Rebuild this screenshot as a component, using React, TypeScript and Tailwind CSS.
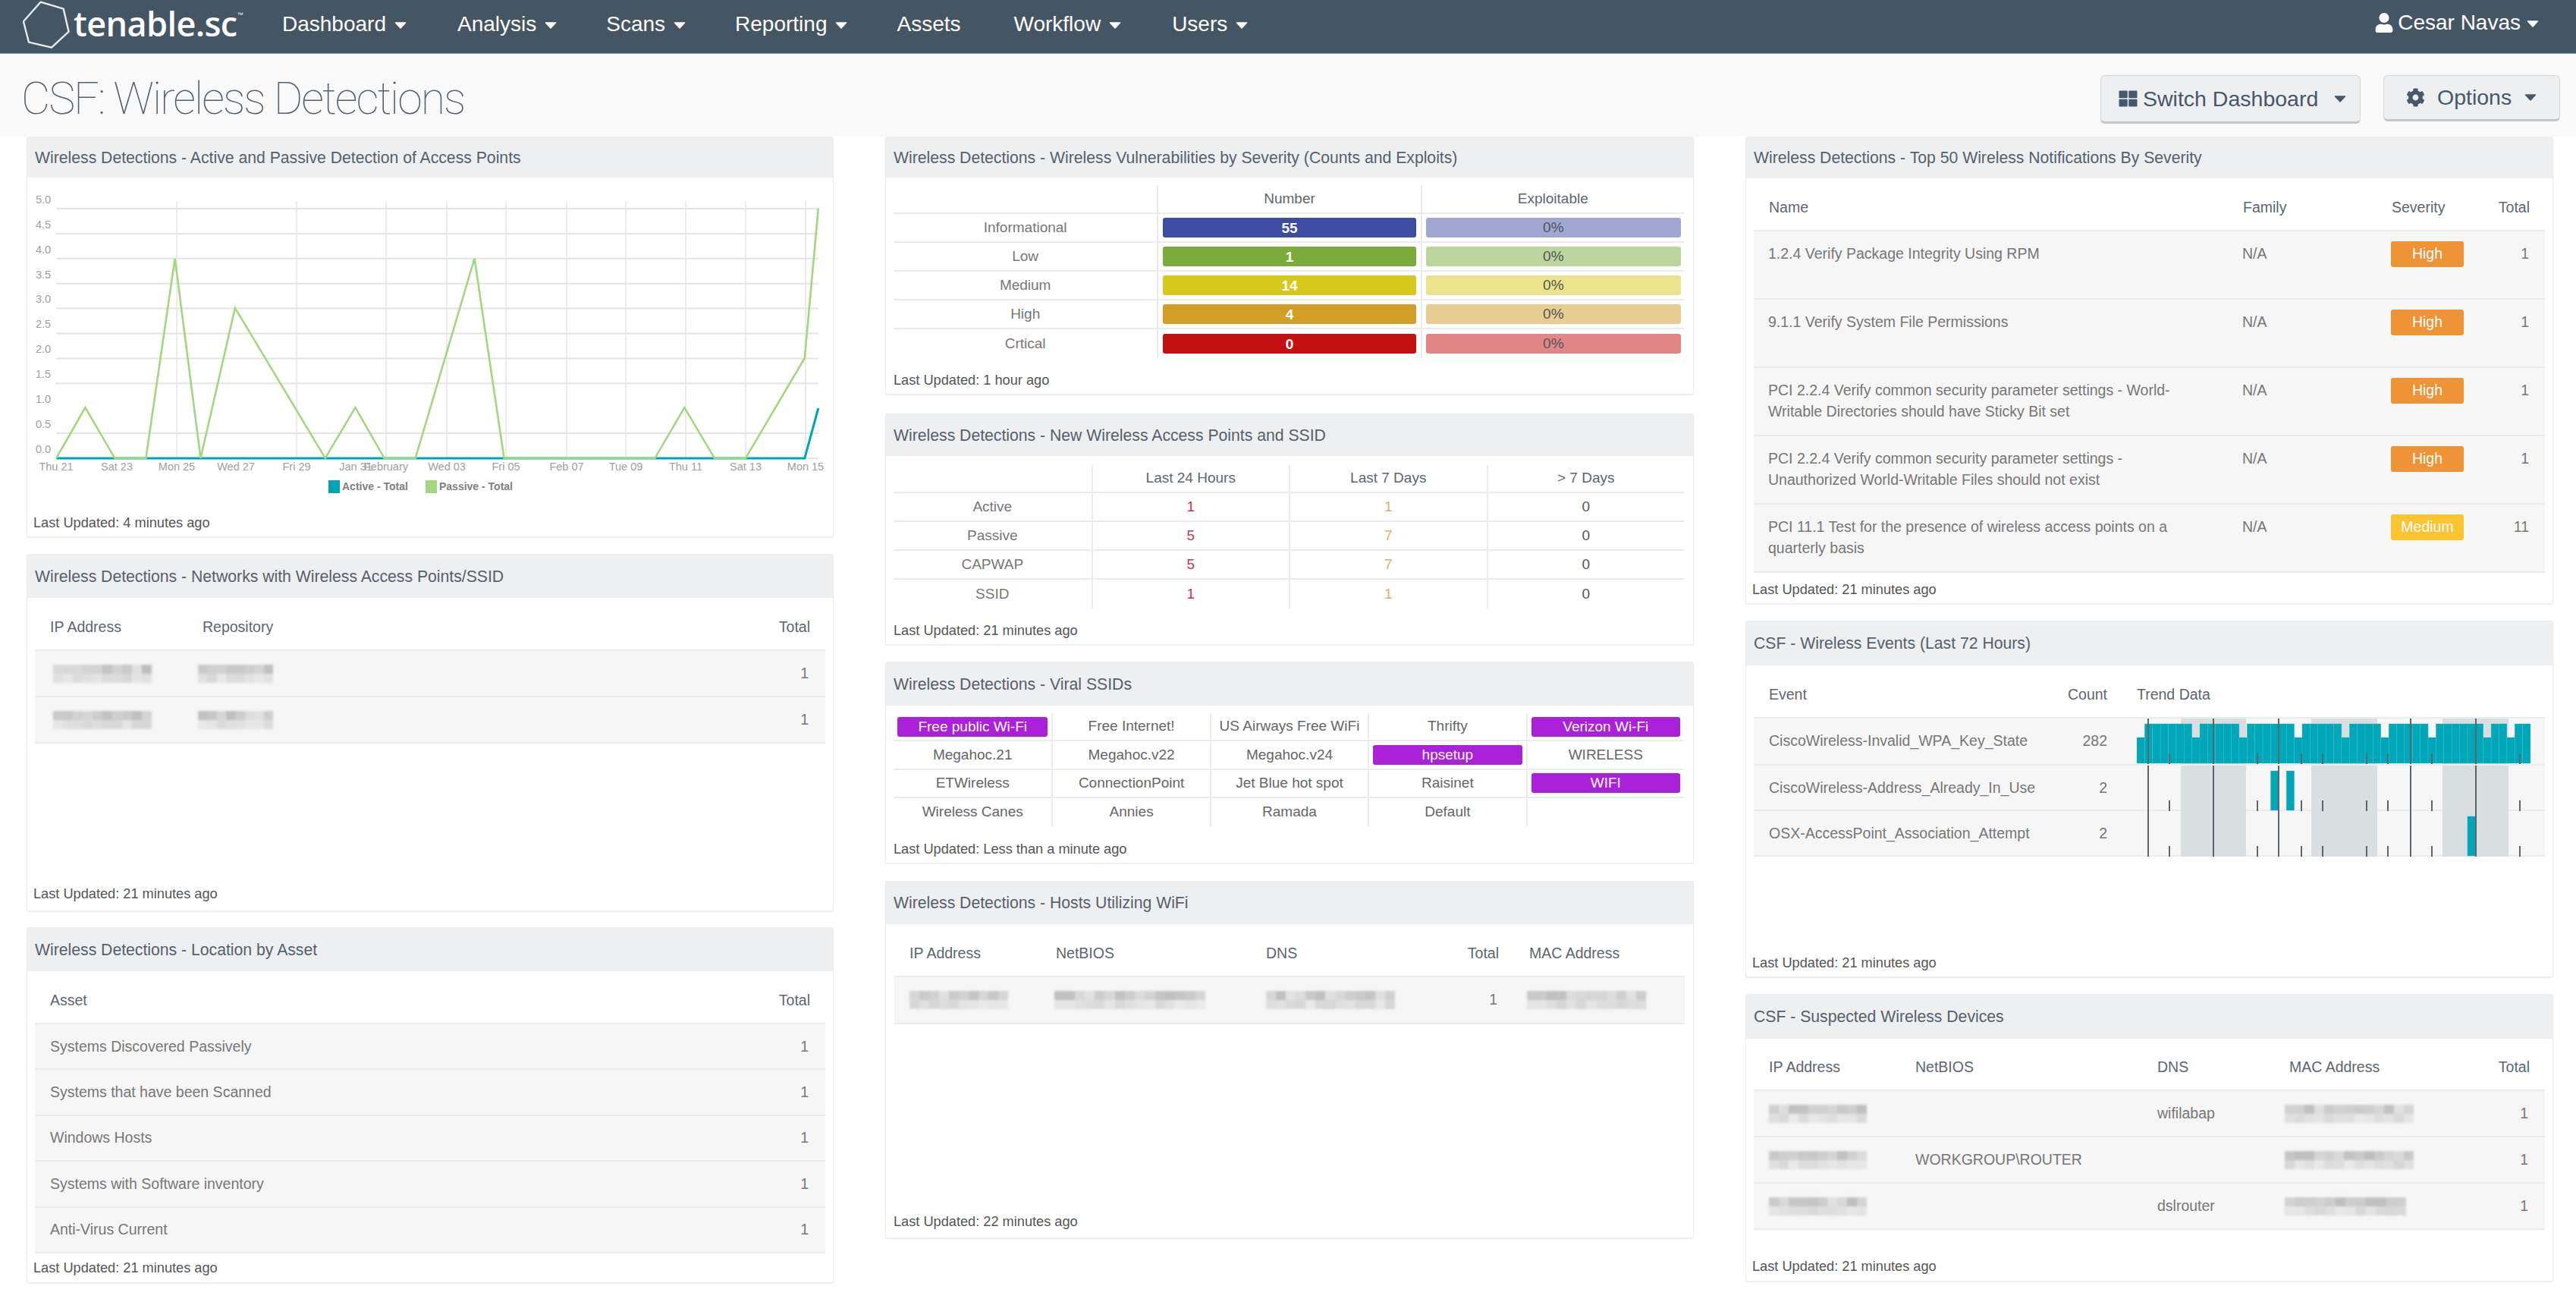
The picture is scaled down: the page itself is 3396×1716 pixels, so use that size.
import type { ReactNode } from "react";
import { FaCog, FaThLarge, FaUser } from "react-icons/fa";

function Caret({ className = "" }: { className?: string }) {
  return (
    <svg viewBox="0 0 16 9" className={`w-4 h-[9px] shrink-0 ${className}`}>
      <path d="M1.5 1h13L8 8z" fill="currentColor" stroke="currentColor" strokeWidth="1.5" strokeLinejoin="round" />
    </svg>
  );
}

function NavItem({ label, caret = true, className = "" }: { label: string; caret?: boolean; className?: string }) {
  return (
    <div className={`flex items-center gap-[11px] ${className}`}>
      <span>{label}</span>
      {caret && <Caret className="mt-[3px]" />}
    </div>
  );
}

function Logo() {
  return (
    <div className="flex items-center w-[372px] shrink-0 pl-[30px]">
      <svg viewBox="0 0 64 64" className="w-[64px] h-[64px] shrink-0 mt-[-4px]">
        <path d="M23.5 1.7 53.7 10.7 60.6 40.7 38 61.7 8 54.7 .9 27.3z" fill="none" stroke="#e8ecef" strokeWidth="2.4" strokeLinejoin="round" />
      </svg>
      <span className="ml-[3px] text-[45px] leading-none font-semibold text-white font-['Open_Sans',sans-serif] mt-[-10px] tracking-[-0.6px]">tenable.sc</span>
      <span className="text-[8px] text-white mt-[-30px]">™</span>
    </div>
  );
}

function TopNav() {
  return (
    <nav className="flex items-center h-[71px] bg-[#445564] border-b border-[#8f9ba6] text-[28px] text-white">
      <Logo />
      <div className="flex items-center gap-[65px] mt-[-7px]">
        <NavItem label="Dashboard" />
        <NavItem label="Analysis" className="ml-[2px]" />
        <NavItem label="Scans" />
        <NavItem label="Reporting" />
        <NavItem label="Assets" caret={false} />
        <NavItem label="Workflow" className="ml-[5px]" />
        <NavItem label="Users" className="ml-[2px]" />
      </div>
      <div className="ml-auto flex items-center mr-[49px] mt-[-11px]">
        <FaUser className="w-[24px] h-[26px] mr-[6px]" />
        <span>Cesar Navas</span>
        <Caret className="ml-[8px] mt-[3px]" />
      </div>
    </nav>
  );
}

function PageHeader() {
  return (
    <header className="flex items-start h-[109px] bg-[#f9f9f9] pl-[28px] pr-[21px]">
      <h1 className="mt-[25px] text-[59px] leading-[68px] tracking-[-2px] font-thin text-[#55626e] font-['Roboto',sans-serif]">CSF: Wireless Detections</h1>
      <div className="ml-auto flex items-start gap-[30px] mt-[28px] text-[28.5px] text-[#46586a]">
        <button className="flex items-center h-[64px] w-[343px] pl-[22px] bg-[#eeeff1] border border-[#d5d7d9] border-b-[3px] border-b-[#c4c7ca] rounded-[6px]">
          <FaThLarge className="w-[27px] h-[24px] mr-[6px]" />
          <span>Switch Dashboard</span>
          <Caret className="ml-[21px]" />
        </button>
        <button className="flex items-center h-[61px] w-[233px] pl-[29px] bg-[#eeeff1] border border-[#d5d7d9] border-b-[3px] border-b-[#c4c7ca] rounded-[6px]">
          <FaCog className="w-[25px] h-[25px] mr-[16px]" />
          <span>Options</span>
          <Caret className="ml-[17px]" />
        </button>
      </div>
    </header>
  );
}

interface PanelProps {
  title: string;
  updated: string;
  className: string;
  headClass?: string;
  footClass?: string;
  children: ReactNode;
}

function Panel({ title, updated, className, headClass = "h-[57px]", footClass = "pl-[8px] pb-[6px]", children }: PanelProps) {
  return (
    <section className={`flex flex-col bg-white border border-[#eeeeee] rounded-[3px] shadow-[0_1px_2px_rgba(0,0,0,0.07)] ${className}`}>
      <div className={`flex items-center shrink-0 pl-[10px] bg-[#eeeff1] text-[21.2px] text-[#56616b] ${headClass}`}>{title}</div>
      <div className="flex-1 min-h-0 px-[10px] pt-[10px]">{children}</div>
      <div className={`shrink-0 leading-[24px] text-[18.2px] text-[#555555] ${footClass}`}>Last Updated: {updated}</div>
    </section>
  );
}

function Head({ cols, children }: { cols: string; children: ReactNode }) {
  return <div className={`grid items-center h-[60px] px-[20px] border-b-2 border-[#ececec] text-[19.5px] text-[#5c6670] ${cols}`}>{children}</div>;
}

function Row({ cols, h = "h-[61px]", children }: { cols: string; h?: string; children: ReactNode }) {
  return <div className={`grid items-center px-[20px] bg-[#f6f6f6] border-b-2 border-[#ececec] text-[19.5px] text-[#777777] ${cols} ${h}`}>{children}</div>;
}

// pixelated redaction block, like the censored values in the picture
function Mosaic({ w, seed }: { w: number; seed: number }) {
  const cells = Math.round(w / 13);
  const shade = (row: number, i: number) => {
    const n = Math.sin(seed * 12.9 + i * 78.2 + row * 37.7) * 43758.5;
    const f = n - Math.floor(n);
    const v = Math.round(row === 0 ? 190 + f * 36 : 214 + f * 20);
    return `rgb(${v},${v},${v})`;
  };
  return (
    <div className="flex flex-col blur-[1.5px]" style={{ width: w }}>
      {[0, 1].map((row) => (
        <div key={row} className="flex h-[12px]">
          {Array.from({ length: cells }, (_, i) => (
            <span key={i} className="flex-1" style={{ background: shade(row, i) }} />
          ))}
        </div>
      ))}
    </div>
  );
}

const passive = [
  [74.2, 603.8], [112.4, 537.2], [151.3, 603.8], [192.4, 603.8], [230.6, 340.7], [264.5, 603.8], [309.9, 405.9],
  [428.8, 603.8], [468.4, 537.2], [506.6, 603.8], [547.7, 603.8], [625.5, 340.7], [664.5, 603.8], [863.4, 603.8],
  [902.3, 537.2], [941.9, 603.8], [983, 603.8], [1060.8, 472], [1078.8, 274.6],
];
const active = [[74.2, 604], [1060.8, 604], [1078.8, 538]];
const xTicks = [
  ["Thu 21", 74], ["Sat 23", 154], ["Mon 25", 233], ["Wed 27", 311], ["Fri 29", 391], ["Jan 31", 469], ["February", 509],
  ["Wed 03", 589], ["Fri 05", 667], ["Feb 07", 747], ["Tue 09", 825], ["Thu 11", 904], ["Sat 13", 983], ["Mon 15", 1062],
] as const;
const vLines = [233, 391, 509, 589, 667, 747, 825, 904, 983, 1062];
const yVals = ["5.0", "4.5", "4.0", "3.5", "3.0", "2.5", "2.0", "1.5", "1.0", "0.5", "0.0"];
const toPoints = (p: number[][]) => p.map((q) => q.join(",")).join(" ");

function DetectionChart() {
  return (
    <svg viewBox="36 244 1062 410" className="block w-[1062px] h-[410px] ml-[-10px]">
      {vLines.map((x) => (
        <line key={x} x1={x} x2={x} y1={265} y2={604} stroke="#e6e6e6" strokeWidth="1.5" />
      ))}
      {yVals.map((v, i) => {
        const y = 275 + i * 32.9;
        return (
          <g key={v}>
            {v !== "1.0" && <line x1={74} x2={1079} y1={y} y2={y} stroke="#e4e4e4" strokeWidth="2" />}
            <text x={47} y={y - 11} dominantBaseline="middle" fontSize="14.5" fill="#a0a0a0">{v}</text>
          </g>
        );
      })}
      {xTicks.map(([t, x]) => (
        <text key={t} x={x} y={616} textAnchor="middle" dominantBaseline="middle" fontSize="14.5" fill="#a0a0a0">{t}</text>
      ))}
      <polyline points={toPoints(active)} fill="none" stroke="#00a5b5" strokeWidth="3" />
      <polyline points={toPoints(passive)} fill="none" stroke="#a3d77f" strokeWidth="2.6" />
      <rect x={433} y={633} width={15} height={17} fill="#00a5b5" />
      <text x={451} y={642} dominantBaseline="middle" fontSize="14" fontWeight="700" fill="#808080">Active - Total</text>
      <rect x={561} y={633} width={15} height={17} fill="#a3d77f" />
      <text x={579} y={642} dominantBaseline="middle" fontSize="14" fontWeight="700" fill="#808080">Passive - Total</text>
    </svg>
  );
}

const severity = [
  { label: "Informational", n: "55", bar: "bg-[#3d4ca0]", light: "bg-[#9fa7d2]" },
  { label: "Low", n: "1", bar: "bg-[#7bab3a]", light: "bg-[#bcd59d]" },
  { label: "Medium", n: "14", bar: "bg-[#d6c91c]", light: "bg-[#eae38c]" },
  { label: "High", n: "4", bar: "bg-[#d29e27]", light: "bg-[#e8cd92]" },
  { label: "Crtical", n: "0", bar: "bg-[#c30f10]", light: "bg-[#e18686]" },
];

function SeverityTable() {
  return (
    <div className="text-[19px] text-[#777777] text-center">
      <div className="grid grid-cols-3 h-[38px] items-stretch border-b-2 border-[#ececec] text-[#5c6670]">
        <div />
        <div className="flex items-center justify-center border-l-2 border-[#ececec]">Number</div>
        <div className="flex items-center justify-center border-l-2 border-[#ececec]">Exploitable</div>
      </div>
      {severity.map((s, i) => (
        <div key={s.label} className={`grid grid-cols-3 h-[38px] items-stretch ${i < 4 ? "border-b-2 border-[#ececec]" : ""}`}>
          <div className="flex items-center justify-center">{s.label}</div>
          <div className="flex items-center border-l-2 border-[#ececec] pl-[6px] pr-[6px]">
            <div className={`w-full h-[26px] leading-[27px] rounded-[3px] font-bold text-white ${s.bar}`}>{s.n}</div>
          </div>
          <div className="flex items-center border-l-2 border-[#ececec] pl-[5px] pr-[4px]">
            <div className={`w-full h-[26px] leading-[25px] rounded-[3px] text-[#555555] ${s.light}`}>0%</div>
          </div>
        </div>
      ))}
    </div>
  );
}

const newAps = [
  ["Active", "1", "1", "0"],
  ["Passive", "5", "7", "0"],
  ["CAPWAP", "5", "7", "0"],
  ["SSID", "1", "1", "0"],
];

function NewApTable() {
  const cell = "flex items-center justify-center border-l-2 border-[#ececec]";
  return (
    <div className="text-[19px] text-center">
      <div className="grid grid-cols-4 h-[37px] border-b-2 border-[#ececec] text-[#5c6670]">
        <div />
        <div className={cell}>Last 24 Hours</div>
        <div className={cell}>Last 7 Days</div>
        <div className={cell}>&gt; 7 Days</div>
      </div>
      {newAps.map((r, i) => (
        <div key={r[0]} className={`grid grid-cols-4 h-[38px] ${i < 3 ? "border-b-2 border-[#ececec]" : ""}`}>
          <div className="flex items-center justify-center text-[#777777]">{r[0]}</div>
          <div className={`${cell} text-[#d0344a]`}>{r[1]}</div>
          <div className={`${cell} text-[#dcae72]`}>{r[2]}</div>
          <div className={`${cell} text-[#555555]`}>{r[3]}</div>
        </div>
      ))}
    </div>
  );
}

const ssids: { t: string; hot?: boolean }[][] = [
  [{ t: "Free public Wi-Fi", hot: true }, { t: "Free Internet!" }, { t: "US Airways Free WiFi" }, { t: "Thrifty" }, { t: "Verizon Wi-Fi", hot: true }],
  [{ t: "Megahoc.21" }, { t: "Megahoc.v22" }, { t: "Megahoc.v24" }, { t: "hpsetup", hot: true }, { t: "WIRELESS" }],
  [{ t: "ETWireless" }, { t: "ConnectionPoint" }, { t: "Jet Blue hot spot" }, { t: "Raisinet" }, { t: "WIFI", hot: true }],
  [{ t: "Wireless Canes" }, { t: "Annies" }, { t: "Ramada" }, { t: "Default" }, { t: "" }],
];

function SsidGrid() {
  return (
    <div className="text-[19px] text-[#666666] text-center">
      {ssids.map((row, r) => (
        <div key={r} className={`grid grid-cols-5 h-[37.3px] ${r < 3 ? "border-b-2 border-[#ececec]" : ""}`}>
          {row.map((c, i) => (
            <div key={i} className={`flex items-center justify-center px-[5px] ${i > 0 ? "border-l-2 border-[#ececec]" : ""}`}>
              {c.hot ? <div className="w-full h-[26px] leading-[26px] rounded-[3px] bg-[#ab20d9] text-white">{c.t}</div> : c.t}
            </div>
          ))}
        </div>
      ))}
    </div>
  );
}

const issues = [
  { name: "1.2.4 Verify Package Integrity Using RPM", sev: "High", total: "1" },
  { name: "9.1.1 Verify System File Permissions", sev: "High", total: "1" },
  { name: "PCI 2.2.4 Verify common security parameter settings - World-Writable Directories should have Sticky Bit set", sev: "High", total: "1" },
  { name: "PCI 2.2.4 Verify common security parameter settings - Unauthorized World-Writable Files should not exist", sev: "High", total: "1" },
  { name: "PCI 11.1 Test for the presence of wireless access points on a quarterly basis", sev: "Medium", total: "11" },
];
const issueCols = "grid-cols-[625px_196px_96px_1fr]";

function IssueTable() {
  return (
    <div>
      <Head cols={`${issueCols} px-[19px]`}>
        <span>Name</span>
        <span>Family</span>
        <span>Severity</span>
        <span className="text-right">Total</span>
      </Head>
      {issues.map((it) => (
        <div key={it.name} className={`grid items-start h-[90px] px-[19px] pt-[15px] leading-[28px] bg-[#f6f6f6] border-b-2 border-[#ececec] text-[19.5px] text-[#777777] ${issueCols}`}>
          <span className="w-[555px]">{it.name}</span>
          <span>N/A</span>
          <span className={`h-[34px] mt-[-2px] leading-[32px] rounded-[3px] text-center text-white ${it.sev === "High" ? "bg-[#ee9336]" : "bg-[#fdc431]"}`}>{it.sev}</span>
          <span className="text-right pr-[2px]">{it.total}</span>
        </div>
      ))}
    </div>
  );
}

const lowBars = [0, 7, 13, 20, 26, 31, 37, 44, 47];
const majors = [15, 101, 187, 361, 447];
const minors = [43, 159, 217, 245, 303, 331, 389, 505];
const bands = [[58, 86], [230, 87], [403, 87]];
const barW = 10.38;

function Trend({ bars }: { bars: number[] }) {
  return (
    <svg viewBox="0 0 519 60" className="block w-[519px] h-full" preserveAspectRatio="none">
      {bands.map(([x, w]) => (
        <rect key={x} x={x} y={0} width={w} height={60} fill="#d9dee0" />
      ))}
      {bars.map((i) => {
        const top = lowBars.includes(i) && bars.length > 3 ? 25 : 7;
        return <rect key={i} x={i * barW} y={top} width={barW} height={59 - top} fill="#00a7b9" stroke="#3dbcc9" strokeWidth="0.4" />;
      })}
      {majors.map((x) => (
        <line key={x} x1={x} x2={x} y1={0} y2={60} stroke="#5a6670" strokeWidth="2" />
      ))}
      {minors.map((x) => (
        <line key={x} x1={x} x2={x} y1={46} y2={60} stroke="#5a6670" strokeWidth="2" />
      ))}
    </svg>
  );
}

const allBars = Array.from({ length: 50 }, (_, i) => i);
const events = [
  { name: "CiscoWireless-Invalid_WPA_Key_State", count: "282", bars: allBars, h: "h-[62px]" },
  { name: "CiscoWireless-Address_Already_In_Use", count: "2", bars: [17, 19], h: "h-[60px]" },
  { name: "OSX-AccessPoint_Association_Attempt", count: "2", bars: [42], h: "h-[60px]" },
];
const eventCols = "grid-cols-[360px_86px_39px_1fr]";

function EventTable() {
  return (
    <div>
      <Head cols={`${eventCols} px-[19px] h-[58px]`}>
        <span>Event</span>
        <span className="text-right">Count</span>
        <span />
        <span>Trend Data</span>
      </Head>
      {events.map((e) => (
        <Row key={e.name} cols={`${eventCols} px-[19px]`} h={e.h}>
          <span>{e.name}</span>
          <span className="text-right">{e.count}</span>
          <span />
          <div className="h-full">
            <Trend bars={e.bars} />
          </div>
        </Row>
      ))}
    </div>
  );
}

const locations = ["Systems Discovered Passively", "Systems that have been Scanned", "Windows Hosts", "Systems with Software inventory", "Anti-Virus Current"];
const netCols = "grid-cols-[201px_1fr_auto]";
const hostCols = "grid-cols-[193px_277px_230px_77px_1fr]";
const deviceCols = "grid-cols-[193px_319px_174px_1fr]";

const devices = [
  { netbios: "", dns: "wifilabap", seed: 3, mac: 170 },
  { netbios: "WORKGROUP\\ROUTER", dns: "", seed: 5, mac: 170 },
  { netbios: "", dns: "dslrouter", seed: 8, mac: 160 },
];

export default function App() {
  return (
    <div className="w-[3396px] h-[1716px] overflow-hidden bg-white font-['Liberation_Sans',Arial,sans-serif]">
      <TopNav />
      <PageHeader />
      <main className="flex gap-[68px] pl-[35px]">
        <div className="flex flex-col w-[1064px]">
          <Panel title="Wireless Detections - Active and Passive Detection of Access Points" updated="4 minutes ago" className="h-[528px]" headClass="h-[53px]">
            <DetectionChart />
          </Panel>
          <Panel title="Wireless Detections - Networks with Wireless Access Points/SSID" updated="21 minutes ago" className="h-[471px] mt-[22px]" footClass="pl-[8px] pb-[10px]">
            <Head cols={netCols}>
              <span>IP Address</span>
              <span>Repository</span>
              <span className="text-right">Total</span>
            </Head>
            {[1, 2].map((i) => (
              <Row key={i} cols={netCols}>
                <div className="ml-[4px]"><Mosaic w={130} seed={i} /></div>
                <div className="ml-[-6px]"><Mosaic w={99} seed={i + 4} /></div>
                <span className="text-right pr-[2px]">1</span>
              </Row>
            ))}
          </Panel>
          <Panel title="Wireless Detections - Location by Asset" updated="21 minutes ago" className="h-[469px] mt-[21px]" footClass="pl-[8px] pb-[7px]">
            <Head cols="grid-cols-[1fr_auto]">
              <span>Asset</span>
              <span className="text-right">Total</span>
            </Head>
            {locations.map((l) => (
              <Row key={l} cols="grid-cols-[1fr_auto]" h="h-[60.4px]">
                <span>{l}</span>
                <span className="text-right pr-[2px]">1</span>
              </Row>
            ))}
          </Panel>
        </div>

        <div className="flex flex-col w-[1066px]">
          <Panel title="Wireless Detections - Wireless Vulnerabilities by Severity (Counts and Exploits)" updated="1 hour ago" className="h-[340px]" headClass="h-[53px]" footClass="pl-[10px] pb-[6px]">
            <div className="mr-[2px]"><SeverityTable /></div>
          </Panel>
          <Panel title="Wireless Detections - New Wireless Access Points and SSID" updated="21 minutes ago" className="h-[305px] mt-[25px]" headClass="h-[55px]" footClass="pl-[10px] pb-[6px]">
            <div className="mr-[2px] mt-[2px]"><NewApTable /></div>
          </Panel>
          <Panel title="Wireless Detections - Viral SSIDs" updated="Less than a minute ago" className="h-[266px] mt-[22px]" footClass="pl-[10px] pb-[6px]">
            <div className="mr-[2px]"><SsidGrid /></div>
          </Panel>
          <Panel title="Wireless Detections - Hosts Utilizing WiFi" updated="22 minutes ago" className="h-[471px] mt-[23px]" headClass="h-[56px]" footClass="pl-[10px] pb-[9px]">
            <div className="mx-[1px]">
              <Head cols={hostCols}>
                <span>IP Address</span>
                <span>NetBIOS</span>
                <span>DNS</span>
                <span className="text-right">Total</span>
                <span className="pl-[40px]">MAC Address</span>
              </Head>
              <Row cols={hostCols} h="h-[62px]">
                <Mosaic w={130} seed={11} />
                <div className="ml-[-2px]"><Mosaic w={199} seed={12} /></div>
                <Mosaic w={170} seed={13} />
                <span className="text-right pr-[2px]">1</span>
                <div className="pl-[37px]"><Mosaic w={157} seed={14} /></div>
              </Row>
            </div>
          </Panel>
        </div>

        <div className="flex flex-col w-[1065px]">
          <Panel title="Wireless Detections - Top 50 Wireless Notifications By Severity" updated="21 minutes ago" className="h-[616px]" headClass="h-[54px]">
            <IssueTable />
          </Panel>
          <Panel title="CSF - Wireless Events (Last 72 Hours)" updated="21 minutes ago" className="h-[470px] mt-[22px]" headClass="h-[58px]">
            <EventTable />
          </Panel>
          <Panel title="CSF - Suspected Wireless Devices" updated="21 minutes ago" className="h-[379px] mt-[22px]" headClass="h-[58px]" footClass="pl-[8px] pb-[7px]">
            <Head cols={`${deviceCols} px-[19px] mt-[-1px]`}>
              <span>IP Address</span>
              <span>NetBIOS</span>
              <span>DNS</span>
              <span className="flex justify-between">MAC Address<span>Total</span></span>
            </Head>
            {devices.map((d, i) => (
              <Row key={i} cols={`${deviceCols} px-[19px]`}>
                <Mosaic w={129} seed={d.seed} />
                <span>{d.netbios}</span>
                <span>{d.dns}</span>
                <div className="flex items-center justify-between">
                  <div className="ml-[-6px]"><Mosaic w={d.mac} seed={d.seed + 20} /></div>
                  <span className="pr-[2px]">1</span>
                </div>
              </Row>
            ))}
          </Panel>
        </div>
      </main>
    </div>
  );
}
